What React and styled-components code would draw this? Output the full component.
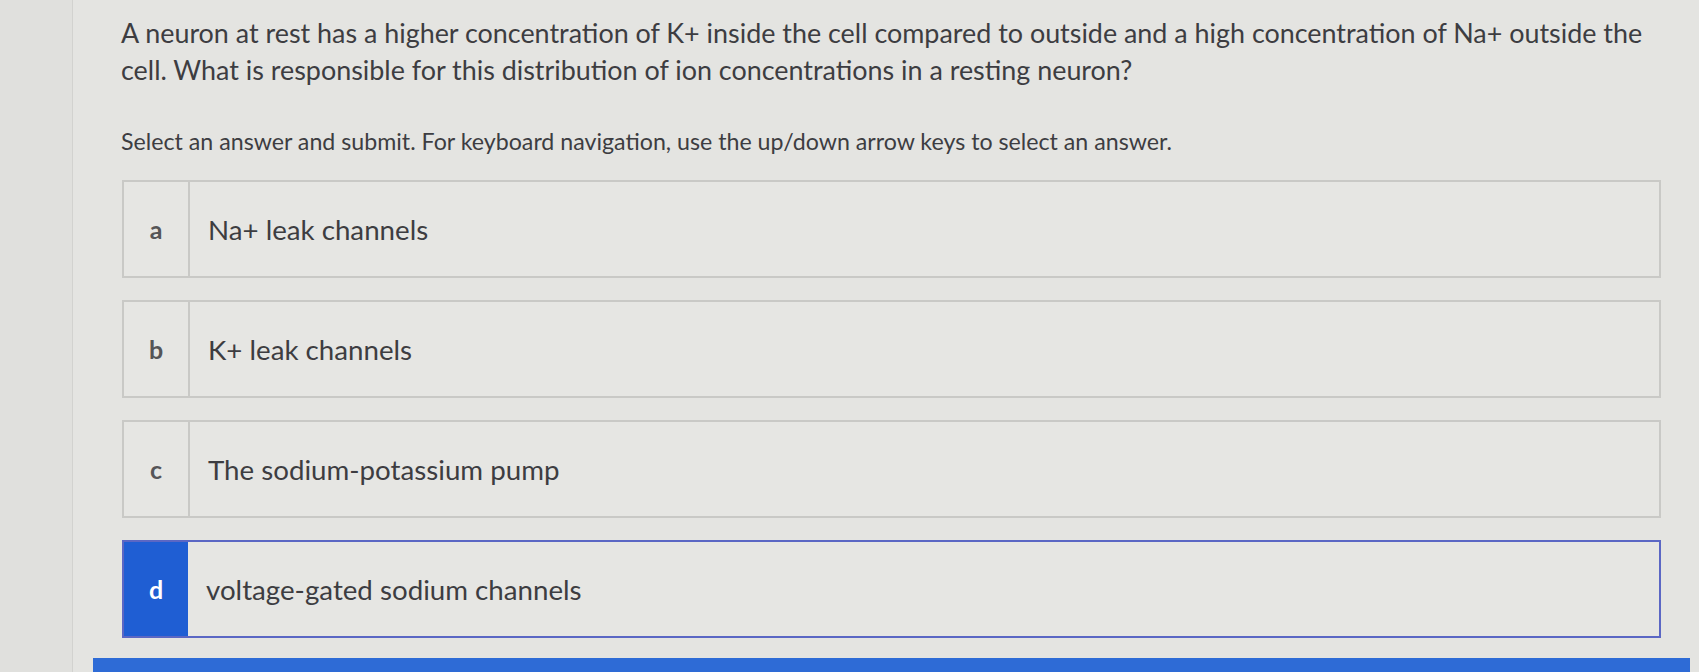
import React from 'react';
import styled, { createGlobalStyle } from 'styled-components';

const GlobalStyle = createGlobalStyle`
  html, body {
    margin: 0;
    padding: 0;
    background: #e3e3e0;
    overflow: hidden;
  }
  body {
    font-family: Lato, "Open Sans", sans-serif;
    color: #3b3b3d;
  }
`;

const Page = styled.div`
  display: flex;
  width: 1699px;
  height: 672px;
  background: #e4e4e1;
`;

const Rail = styled.div`
  width: 72px;
  flex: none;
  background: #e0e0dd;
  border-right: 1px solid #d2d2cf;
`;

const Main = styled.div`
  flex: 1;
  display: flex;
  flex-direction: column;
`;

const Content = styled.div`
  padding: 14px 30px 0 48px;
`;

const Question = styled.p`
  margin: 0;
  font-size: 26.9px;
  line-height: 37px;
  color: #3d3d41;
`;

const Hint = styled.p`
  margin: 35px 0 0;
  font-size: 23.2px;
  line-height: 37px;
  color: #3d3d41;
`;

const Choices = styled.ul`
  list-style: none;
  margin: 20px 0 0;
  padding: 0 8px 0 1px;
  display: flex;
  flex-direction: column;
  gap: 22px;
`;

const Choice = styled.li`
  display: flex;
  height: 98px;
  box-sizing: border-box;
  border: ${({ selected }) => (selected ? '2px solid #5b67c4' : '2px solid #c9c9c6')};
  background: #e6e6e3;
`;

const Letter = styled.div`
  width: 64px;
  flex: none;
  display: flex;
  align-items: center;
  justify-content: center;
  font-size: 25px;
  font-weight: 700;
  color: ${({ selected }) => (selected ? '#ffffff' : '#555557')};
  background: ${({ selected }) => (selected ? '#1f5ed3' : 'transparent')};
  border-right: ${({ selected }) => (selected ? 'none' : '2px solid #c9c9c6')};
`;

const Label = styled.div`
  display: flex;
  align-items: center;
  padding-left: 18px;
  font-size: 27.7px;
  color: #3d3d41;
`;

const SubmitBar = styled.div`
  margin: 20px 9px 0 20px;
  height: 30px;
  background: #2e6bd6;
`;

const options = [
  { key: 'a', text: 'Na+ leak channels' },
  { key: 'b', text: 'K+ leak channels' },
  { key: 'c', text: 'The sodium-potassium pump' },
  { key: 'd', text: 'voltage-gated sodium channels', selected: true },
];

export default function App() {
  return (
    <>
      <GlobalStyle />
      <Page>
        <Rail />
        <Main>
          <Content>
            <Question>
              A neuron at rest has a higher concentration of K+ inside the cell compared to outside and a high
              concentration of Na+ outside the cell. What is responsible for this distribution of ion concentrations in a
              resting neuron?
            </Question>
            <Hint>
              Select an answer and submit. For keyboard navigation, use the up/down arrow keys to select an answer.
            </Hint>
            <Choices>
              {options.map((o) => (
                <Choice key={o.key} selected={o.selected}>
                  <Letter selected={o.selected}>{o.key}</Letter>
                  <Label>{o.text}</Label>
                </Choice>
              ))}
            </Choices>
          </Content>
          <SubmitBar />
        </Main>
      </Page>
    </>
  );
}
